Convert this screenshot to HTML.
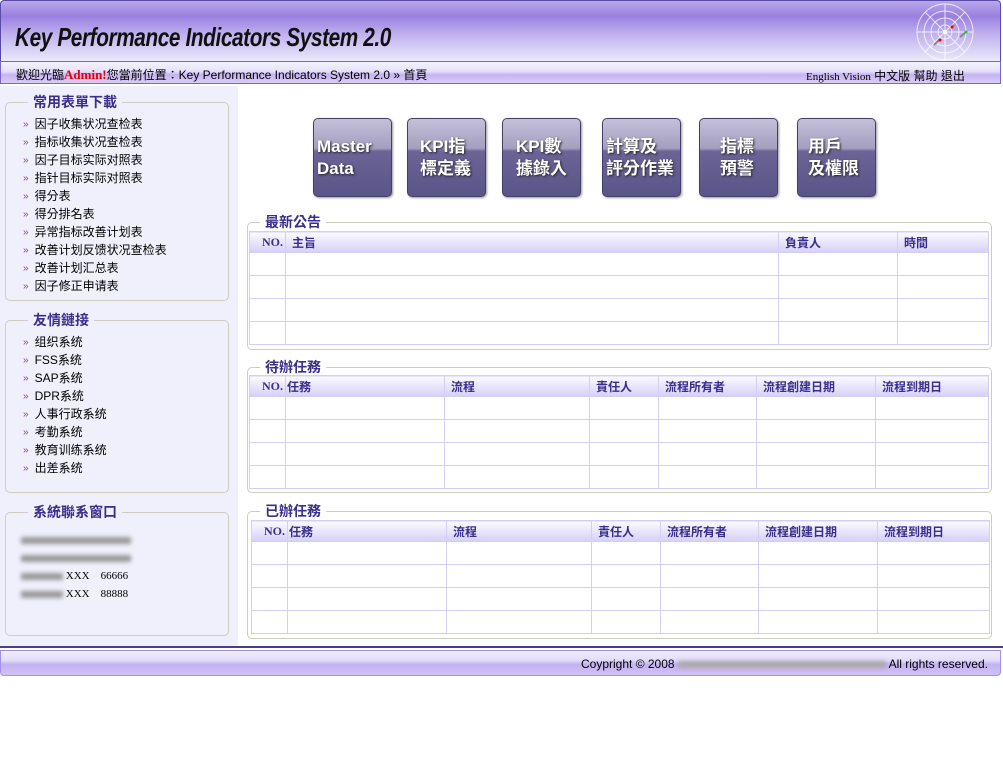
<!DOCTYPE html>
<html><head><meta charset="utf-8">
<style>
*{margin:0;padding:0;box-sizing:border-box}
body{width:1003px;height:768px;background:#fff;position:relative;overflow:hidden;font-family:"Liberation Sans","Noto Sans CJK TC",sans-serif;font-size:12px;color:#000}
.a{position:absolute}
#hd{left:0;top:0;width:1001px;height:62px;border:1px solid #5a4aa8;border-bottom:none;border-radius:4px 4px 0 0;background:linear-gradient(#b8a8ea 0%,#9a80e0 25%,#c0b2ee 55%,#ecebfa 100%)}
#title{left:15px;top:22px;font-size:26px;font-weight:bold;font-style:italic;color:#111;letter-spacing:-0.5px;transform:scaleX(0.8);transform-origin:left;font-family:"Liberation Sans",sans-serif}
#nav{left:0;top:61px;width:1001px;height:23px;border:1px solid #7a66c8;background:linear-gradient(#f4f2fd 0%,#e6e0fa 45%,#c4b4f2 60%,#d8cef6 100%)}
#side{left:0;top:86px;width:238px;height:560px;background:#f0f0fc}
fieldset{position:absolute;border:1px solid #cfcdbf;border-radius:5px}
legend{margin-left:22px;padding:0 5px;font-size:14px;font-weight:bold;color:#3a2f8c;line-height:16px}
.list{list-style:none;padding:5px 0 0 17px;font-size:12px}
.list li{height:18px;line-height:18px;overflow:hidden}
.list li:before{content:"»";color:#8a3aa8;font-size:10px;margin-right:6px;position:relative;top:-1px}
.btn{position:absolute;top:118px;width:79px;height:79px;border-radius:5px;background:linear-gradient(#c4c0d8 0%,#a49ec0 38%,#6c6496 42%,#5a5488 100%);border:1px solid #44406a;box-shadow:1px 1px 2px #999;color:#fff;font-weight:bold;font-size:17px;line-height:22px;padding:17px 0 0 3px;text-shadow:1px 1px 2px #222;font-family:"Liberation Sans","Noto Sans CJK TC",sans-serif}
table{position:absolute;border-collapse:collapse;table-layout:fixed}
td,th{border:1px solid #d4cdf4;height:23px}
th{height:21px;background:linear-gradient(#fbfaff,#d6d0f8);color:#3a2f8c;font-size:12px;text-align:left;padding-left:6px;font-weight:bold}
th.no{text-align:right;padding:0 2px 0 0;font-family:"Liberation Serif",serif;font-size:12px}
.blur{display:inline-block;background:#999;filter:blur(2px);height:7px;vertical-align:middle}
#ft{left:0;top:650px;width:1001px;height:26px;border:1px solid #a390e8;border-radius:0 0 4px 4px;background:linear-gradient(#f2effd 0%,#e2dafa 40%,#c2b2f2 55%,#cfc2f4 100%)}
</style></head><body>
<div id="hd" class="a"></div>
<div id="title" class="a">Key Performance Indicators System 2.0</div>
<svg class="a" style="left:914px;top:3px" width="62" height="58"><g fill="none" stroke="#fff" stroke-opacity=".75"><circle cx="31" cy="29" r="28"/><circle cx="31" cy="29" r="21"/><circle cx="31" cy="29" r="14"/><circle cx="31" cy="29" r="7"/><path d="M31 1V57M3 29H59M11 9L51 49M51 9L11 49"/></g><circle cx="31" cy="29" r="2" fill="#fff"/><path d="M20 42L26 36M37 25L40 22M46 34L52 29" stroke="#888" stroke-width="2"/><circle cx="26" cy="37" r="1.5" fill="#e00"/><circle cx="38" cy="24" r="1.5" fill="#e00"/><circle cx="52" cy="29" r="1.5" fill="#2c2"/></svg>
<div id="nav" class="a"></div>
<div class="a" style="left:16px;top:66px;font-size:12px">歡迎光臨<b style="color:#e00;font-family:'Liberation Serif',serif;font-size:13px">Admin!</b>您當前位置：Key Performance Indicators System 2.0 » 首頁</div>
<div class="a" style="left:806px;top:67px;font-size:12px"><span style="font-family:'Liberation Serif',serif;font-size:11px">English Vision</span> 中文版 幫助 退出</div>
<div id="side" class="a"></div>
<fieldset style="left:5px;top:94px;width:224px;height:207px"><legend>常用表單下載</legend>
<ul class="list"><li>因子收集状况查检表</li><li>指标收集状况查检表</li><li>因子目标实际对照表</li><li>指针目标实际对照表</li><li>得分表</li><li>得分排名表</li><li>异常指标改善计划表</li><li>改善计划反馈状况查检表</li><li>改善计划汇总表</li><li>因子修正申请表</li></ul></fieldset>
<fieldset style="left:5px;top:312px;width:224px;height:181px"><legend>友情鏈接</legend>
<ul class="list"><li>组织系统</li><li>FSS系统</li><li>SAP系统</li><li>DPR系统</li><li>人事行政系统</li><li>考勤系统</li><li>教育训练系统</li><li>出差系统</li></ul></fieldset>
<fieldset style="left:5px;top:504px;width:224px;height:132px"><legend>系統聯系窗口</legend>
<div style="padding:11px 0 0 15px;font-family:'Liberation Serif',serif;font-size:11px;line-height:18px">
<div><span class="blur" style="width:110px"></span></div>
<div><span class="blur" style="width:110px"></span></div>
<div><span class="blur" style="width:42px"></span> XXX &nbsp;&nbsp;&nbsp;66666</div>
<div><span class="blur" style="width:42px"></span> XXX &nbsp;&nbsp;&nbsp;88888</div></div></fieldset>

<div class="btn" style="left:313px">Master<br>Data</div>
<div class="btn" style="left:407px;padding-left:12px">KPI指<br>標定義</div>
<div class="btn" style="left:502px;padding-left:13px">KPI數<br>據錄入</div>
<div class="btn" style="left:602px">計算及<br>評分作業</div>
<div class="btn" style="left:699px;padding-left:20px">指標<br>預警</div>
<div class="btn" style="left:797px;padding-left:10px">用戶<br>及權限</div>

<fieldset style="left:247px;top:214px;width:745px;height:136px"><legend style="margin-left:12px">最新公告</legend></fieldset>
<table style="left:249px;top:231px;width:740px"><colgroup><col style="width:36px"><col style="width:493px"><col style="width:119px"><col></colgroup>
<tr><th class="no">NO.</th><th>主旨</th><th>負責人</th><th>時間</th></tr>
<tr><td></td><td></td><td></td><td></td></tr><tr><td></td><td></td><td></td><td></td></tr><tr><td></td><td></td><td></td><td></td></tr><tr><td></td><td></td><td></td><td></td></tr></table>

<fieldset style="left:247px;top:359px;width:745px;height:134px"><legend style="margin-left:12px">待辦任務</legend></fieldset>
<table style="left:249px;top:375px;width:740px"><colgroup><col style="width:36px"><col style="width:159px"><col style="width:145px"><col style="width:69px"><col style="width:98px"><col style="width:119px"><col></colgroup>
<tr><th class="no">NO.</th><th style="padding-left:1px">任務</th><th>流程</th><th>責任人</th><th>流程所有者</th><th>流程創建日期</th><th>流程到期日</th></tr>
<tr><td></td><td></td><td></td><td></td><td></td><td></td><td></td></tr><tr><td></td><td></td><td></td><td></td><td></td><td></td><td></td></tr><tr><td></td><td></td><td></td><td></td><td></td><td></td><td></td></tr><tr><td></td><td></td><td></td><td></td><td></td><td></td><td></td></tr></table>

<fieldset style="left:247px;top:503px;width:745px;height:136px"><legend style="margin-left:12px">已辦任務</legend></fieldset>
<table style="left:251px;top:520px;width:739px"><colgroup><col style="width:36px"><col style="width:159px"><col style="width:145px"><col style="width:69px"><col style="width:98px"><col style="width:119px"><col></colgroup>
<tr><th class="no">NO.</th><th style="padding-left:1px">任務</th><th>流程</th><th>責任人</th><th>流程所有者</th><th>流程創建日期</th><th>流程到期日</th></tr>
<tr><td></td><td></td><td></td><td></td><td></td><td></td><td></td></tr><tr><td></td><td></td><td></td><td></td><td></td><td></td><td></td></tr><tr><td></td><td></td><td></td><td></td><td></td><td></td><td></td></tr><tr><td></td><td></td><td></td><td></td><td></td><td></td><td></td></tr></table>

<div class="a" style="left:0;top:646px;width:1003px;height:2px;background:#4a3f8c"></div>
<div id="ft" class="a"></div>
<div class="a" style="left:581px;top:657px;font-size:12px">Coypright © 2008 <span class="blur" style="width:208px;background:#aaa"></span> All rights reserved.</div>
</body></html>
